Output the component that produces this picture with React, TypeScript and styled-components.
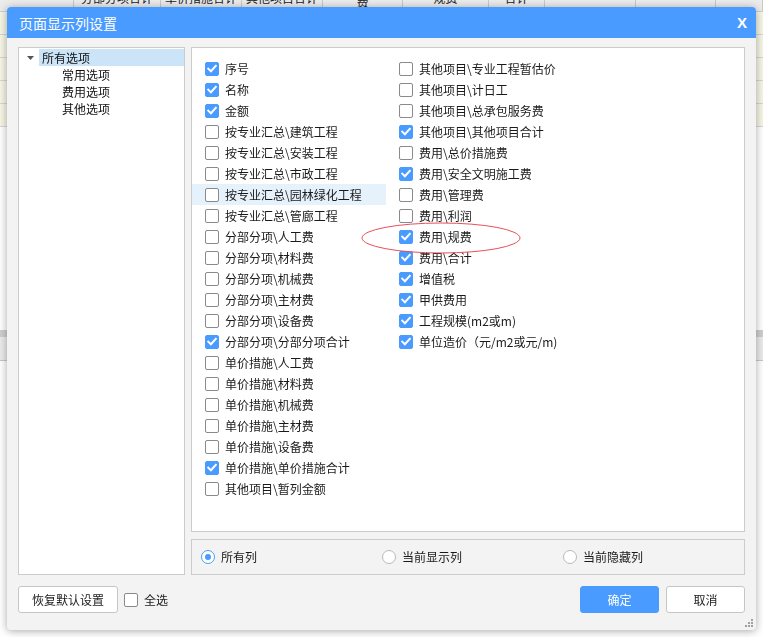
import React from "react";
import styled, { createGlobalStyle } from "styled-components";

const GlobalStyle = createGlobalStyle`
  html, body { margin: 0; padding: 0; background: #fff; }
  body { font-family: "Noto Sans CJK SC", "Noto Sans", sans-serif; font-size: 12px; color: #1f1f1f; }
  * { box-sizing: border-box; }
`;

const BLUE = "#4a9bff";

/* ---------- background sheet ---------- */
const Page = styled.div`
  width: 763px;
  height: 637px;
  overflow: hidden;
  background: #fff;
`;
const HeaderRow = styled.div`
  display: flex;
  height: 12px;
  background: #ececec;
  border-bottom: 1px solid #cfcfcf;
  overflow: hidden;
`;
const HeaderCell = styled.div<{ $w: number; $pb?: number }>`
  width: ${(p) => p.$w}px;
  flex: none;
  border-right: 1px solid #c9c9c9;
  display: flex;
  align-items: flex-end;
  justify-content: center;
  padding-bottom: ${(p) => p.$pb ?? 6}px;
  font-size: 12px;
  line-height: 14px;
  color: #222;
  white-space: nowrap;
  overflow: hidden;
`;
const SheetRow = styled.div`
  height: 23px;
  background: #f6f6e6;
  border-bottom: 1px solid #d6d6d6;
`;
const SheetGap = styled.div`
  height: 203px;
`;
const SheetBandDark = styled.div`
  height: 7px;
  background: #cfcfcf;
`;
const SheetBandLight = styled.div`
  height: 24px;
  background: #ebebeb;
  border-bottom: 1px solid #c8c8c8;
`;

/* ---------- dialog ---------- */
const Dialog = styled.div`
  position: fixed;
  left: 7px;
  top: 7px;
  width: 749px;
  height: 623px;
  background: #f3f3f3;
  border-radius: 4px;
  box-shadow: 0 1px 8px rgba(0, 0, 0, 0.35);
  display: flex;
  flex-direction: column;
  overflow: hidden;
`;
const TitleBar = styled.div`
  height: 31px;
  flex: none;
  background: ${BLUE};
  display: flex;
  align-items: center;
  justify-content: space-between;
  padding: 0 9px 0 12px;
  color: #fff;
`;
const Title = styled.span`
  font-size: 14px;
  line-height: 20px;
`;
const Close = styled.span`
  font-family: "Liberation Sans", sans-serif;
  font-weight: bold;
  font-size: 15px;
  line-height: 15px;
`;
const Body = styled.div`
  flex: 1;
  display: flex;
  flex-direction: column;
  padding: 9px 11px 0 11px;
`;
const Main = styled.div`
  display: grid;
  grid-template-columns: 167px 1fr;
  column-gap: 6px;
  height: 528px;
`;
const Panel = styled.div`
  background: #fff;
  border: 1px solid #cccccc;
`;
const TreePanel = styled(Panel)`
  padding-top: 1px;
`;
const TreeRow = styled.div<{ $indent: number }>`
  display: flex;
  height: 17px;
  align-items: center;
  padding-left: ${(p) => p.$indent}px;
`;
const Toggle = styled.span`
  width: 20px;
  height: 17px;
  display: flex;
  align-items: center;
  padding-left: 8px;
`;
const TreeLabel = styled.span<{ $selected?: boolean }>`
  flex: 1;
  height: 17px;
  line-height: 17px;
  padding-left: 3px;
  background: ${(p) => (p.$selected ? "#cce4f7" : "transparent")};
  color: #111;
`;
const RightCol = styled.div`
  display: flex;
  flex-direction: column;
  gap: 7px;
`;
const ListPanel = styled(Panel)`
  height: 485px;
  position: relative;
  display: flex;
  padding-top: 10px;
`;
const Column = styled.div`
  width: 194px;
  display: flex;
  flex-direction: column;
`;
const Item = styled.div<{ $hl?: boolean }>`
  height: 21px;
  display: flex;
  align-items: center;
  gap: 6px;
  padding-left: 13px;
  background: ${(p) => (p.$hl ? "#e5f1fb" : "transparent")};
  white-space: nowrap;
`;
const Box = styled.span<{ $on?: boolean }>`
  width: 14px;
  height: 14px;
  flex: none;
  border-radius: 2px;
  border: 1px solid ${(p) => (p.$on ? BLUE : "#8a8a8a")};
  background: ${(p) => (p.$on ? BLUE : "#fff")};
  display: flex;
  align-items: center;
  justify-content: center;
`;
const ItemText = styled.span`
  font-size: 12px;
  line-height: 16px;
  color: #1a1a1a;
`;
const Annotation = styled.svg`
  position: absolute;
  left: 168px;
  top: 173px;
  pointer-events: none;
`;
const RadioBar = styled.div`
  height: 36px;
  border: 1px solid #cccccc;
  background: #f3f3f3;
  display: grid;
  grid-template-columns: 181px 181px 1fr;
  align-items: center;
  padding-left: 9px;
`;
const RadioItem = styled.label`
  display: flex;
  align-items: center;
  gap: 6px;
`;
const RadioCircle = styled.span<{ $on?: boolean }>`
  width: 14px;
  height: 14px;
  border-radius: 50%;
  border: 1px solid ${(p) => (p.$on ? BLUE : "#b9b9b9")};
  background: #fff;
  display: flex;
  align-items: center;
  justify-content: center;
  &::after {
    content: "";
    width: 6px;
    height: 6px;
    border-radius: 50%;
    background: ${(p) => (p.$on ? BLUE : "transparent")};
  }
`;
const Footer = styled.div`
  margin-top: 11px;
  height: 27px;
  display: flex;
  align-items: center;
`;
const Button = styled.button<{ $primary?: boolean; $w: number }>`
  width: ${(p) => p.$w}px;
  height: 27px;
  border-radius: 3px;
  border: 1px solid ${(p) => (p.$primary ? BLUE : "#c6c6c6")};
  background: ${(p) => (p.$primary ? BLUE : "#fff")};
  color: ${(p) => (p.$primary ? "#fff" : "#222")};
  font-family: "Noto Sans CJK SC", sans-serif;
  font-size: 12px;
  line-height: 16px;
  padding: 0;
`;
const SelectAll = styled.label`
  display: flex;
  align-items: center;
  gap: 6px;
  margin-left: 6px;
`;
const Spacer = styled.div`
  flex: 1;
`;
const ButtonGap = styled.div`
  width: 7px;
`;
const Grip = styled.svg`
  position: absolute;
  right: 3px;
  bottom: 3px;
`;

const Check = () => (
  <svg width="10" height="9" viewBox="0 0 10 9">
    <path d="M1.2 4.6 L3.9 7.2 L8.8 1.8" fill="none" stroke="#fff" strokeWidth="2" strokeLinecap="square" />
  </svg>
);

const CheckBox = ({ on }: { on?: boolean }) => <Box $on={on}>{on && <Check />}</Box>;

type Entry = [string, boolean, boolean?];

const col1: Entry[] = [
  ["序号", true],
  ["名称", true],
  ["金额", true],
  ["按专业汇总\\建筑工程", false],
  ["按专业汇总\\安装工程", false],
  ["按专业汇总\\市政工程", false],
  ["按专业汇总\\园林绿化工程", false, true],
  ["按专业汇总\\管廊工程", false],
  ["分部分项\\人工费", false],
  ["分部分项\\材料费", false],
  ["分部分项\\机械费", false],
  ["分部分项\\主材费", false],
  ["分部分项\\设备费", false],
  ["分部分项\\分部分项合计", true],
  ["单价措施\\人工费", false],
  ["单价措施\\材料费", false],
  ["单价措施\\机械费", false],
  ["单价措施\\主材费", false],
  ["单价措施\\设备费", false],
  ["单价措施\\单价措施合计", true],
  ["其他项目\\暂列金额", false],
];

const col2: Entry[] = [
  ["其他项目\\专业工程暂估价", false],
  ["其他项目\\计日工", false],
  ["其他项目\\总承包服务费", false],
  ["其他项目\\其他项目合计", true],
  ["费用\\总价措施费", false],
  ["费用\\安全文明施工费", true],
  ["费用\\管理费", false],
  ["费用\\利润", false],
  ["费用\\规费", true],
  ["费用\\合计", true],
  ["增值税", true],
  ["甲供费用", true],
  ["工程规模(m2或m)", true],
  ["单位造价（元/m2或元/m)", true],
];

const headers: [number, string, number?][] = [
  [74, ""],
  [87, "分部分项合计"],
  [81, "单价措施合计"],
  [81, "其他项目合计"],
  [80, "费", 2],
  [86, "规费"],
  [56, "合计"],
  [91, ""],
  [80, ""],
  [47, ""],
];

const renderColumn = (list: Entry[]) => (
  <Column>
    {list.map(([label, on, hl]) => (
      <Item key={label} $hl={hl}>
        <CheckBox on={on} />
        <ItemText>{label}</ItemText>
      </Item>
    ))}
  </Column>
);

export default function App() {
  return (
    <>
      <GlobalStyle />
      <Page>
        <HeaderRow>
          {headers.map(([w, t, pb], i) => (
            <HeaderCell key={i} $w={w} $pb={pb}>
              {t}
            </HeaderCell>
          ))}
        </HeaderRow>
        <SheetRow />
        <SheetRow />
        <SheetRow />
        <SheetRow />
        <SheetRow />
        <SheetGap />
        <SheetBandDark />
        <SheetBandLight />
      </Page>

      <Dialog>
        <TitleBar>
          <Title>页面显示列设置</Title>
          <Close>X</Close>
        </TitleBar>
        <Body>
          <Main>
            <TreePanel>
              <TreeRow $indent={0}>
                <Toggle>
                  <svg width="7" height="4" viewBox="0 0 7 4">
                    <path d="M0 0 H7 L3.5 4 Z" fill="#555" />
                  </svg>
                </Toggle>
                <TreeLabel $selected>所有选项</TreeLabel>
              </TreeRow>
              {["常用选项", "费用选项", "其他选项"].map((t) => (
                <TreeRow key={t} $indent={40}>
                  <TreeLabel>{t}</TreeLabel>
                </TreeRow>
              ))}
            </TreePanel>
            <RightCol>
              <ListPanel>
                {renderColumn(col1)}
                {renderColumn(col2)}
                <Annotation width="162" height="34" viewBox="0 0 162 34">
                  <ellipse cx="81" cy="17" rx="79" ry="15" fill="none" stroke="#e8505a" strokeWidth="1" />
                </Annotation>
              </ListPanel>
              <RadioBar>
                <RadioItem>
                  <RadioCircle $on />
                  <ItemText>所有列</ItemText>
                </RadioItem>
                <RadioItem>
                  <RadioCircle />
                  <ItemText>当前显示列</ItemText>
                </RadioItem>
                <RadioItem>
                  <RadioCircle />
                  <ItemText>当前隐藏列</ItemText>
                </RadioItem>
              </RadioBar>
            </RightCol>
          </Main>
          <Footer>
            <Button $w={100}>恢复默认设置</Button>
            <SelectAll>
              <CheckBox />
              <ItemText>全选</ItemText>
            </SelectAll>
            <Spacer />
            <Button $w={79} $primary>
              确定
            </Button>
            <ButtonGap />
            <Button $w={79}>取消</Button>
          </Footer>
        </Body>
        <Grip width="9" height="9" viewBox="0 0 9 9">
          <g fill="#a0a0a0">
            <rect x="7" y="1" width="2" height="2" />
            <rect x="4" y="4" width="2" height="2" />
            <rect x="7" y="4" width="2" height="2" />
            <rect x="1" y="7" width="2" height="2" />
            <rect x="4" y="7" width="2" height="2" />
            <rect x="7" y="7" width="2" height="2" />
          </g>
        </Grip>
      </Dialog>
    </>
  );
}
